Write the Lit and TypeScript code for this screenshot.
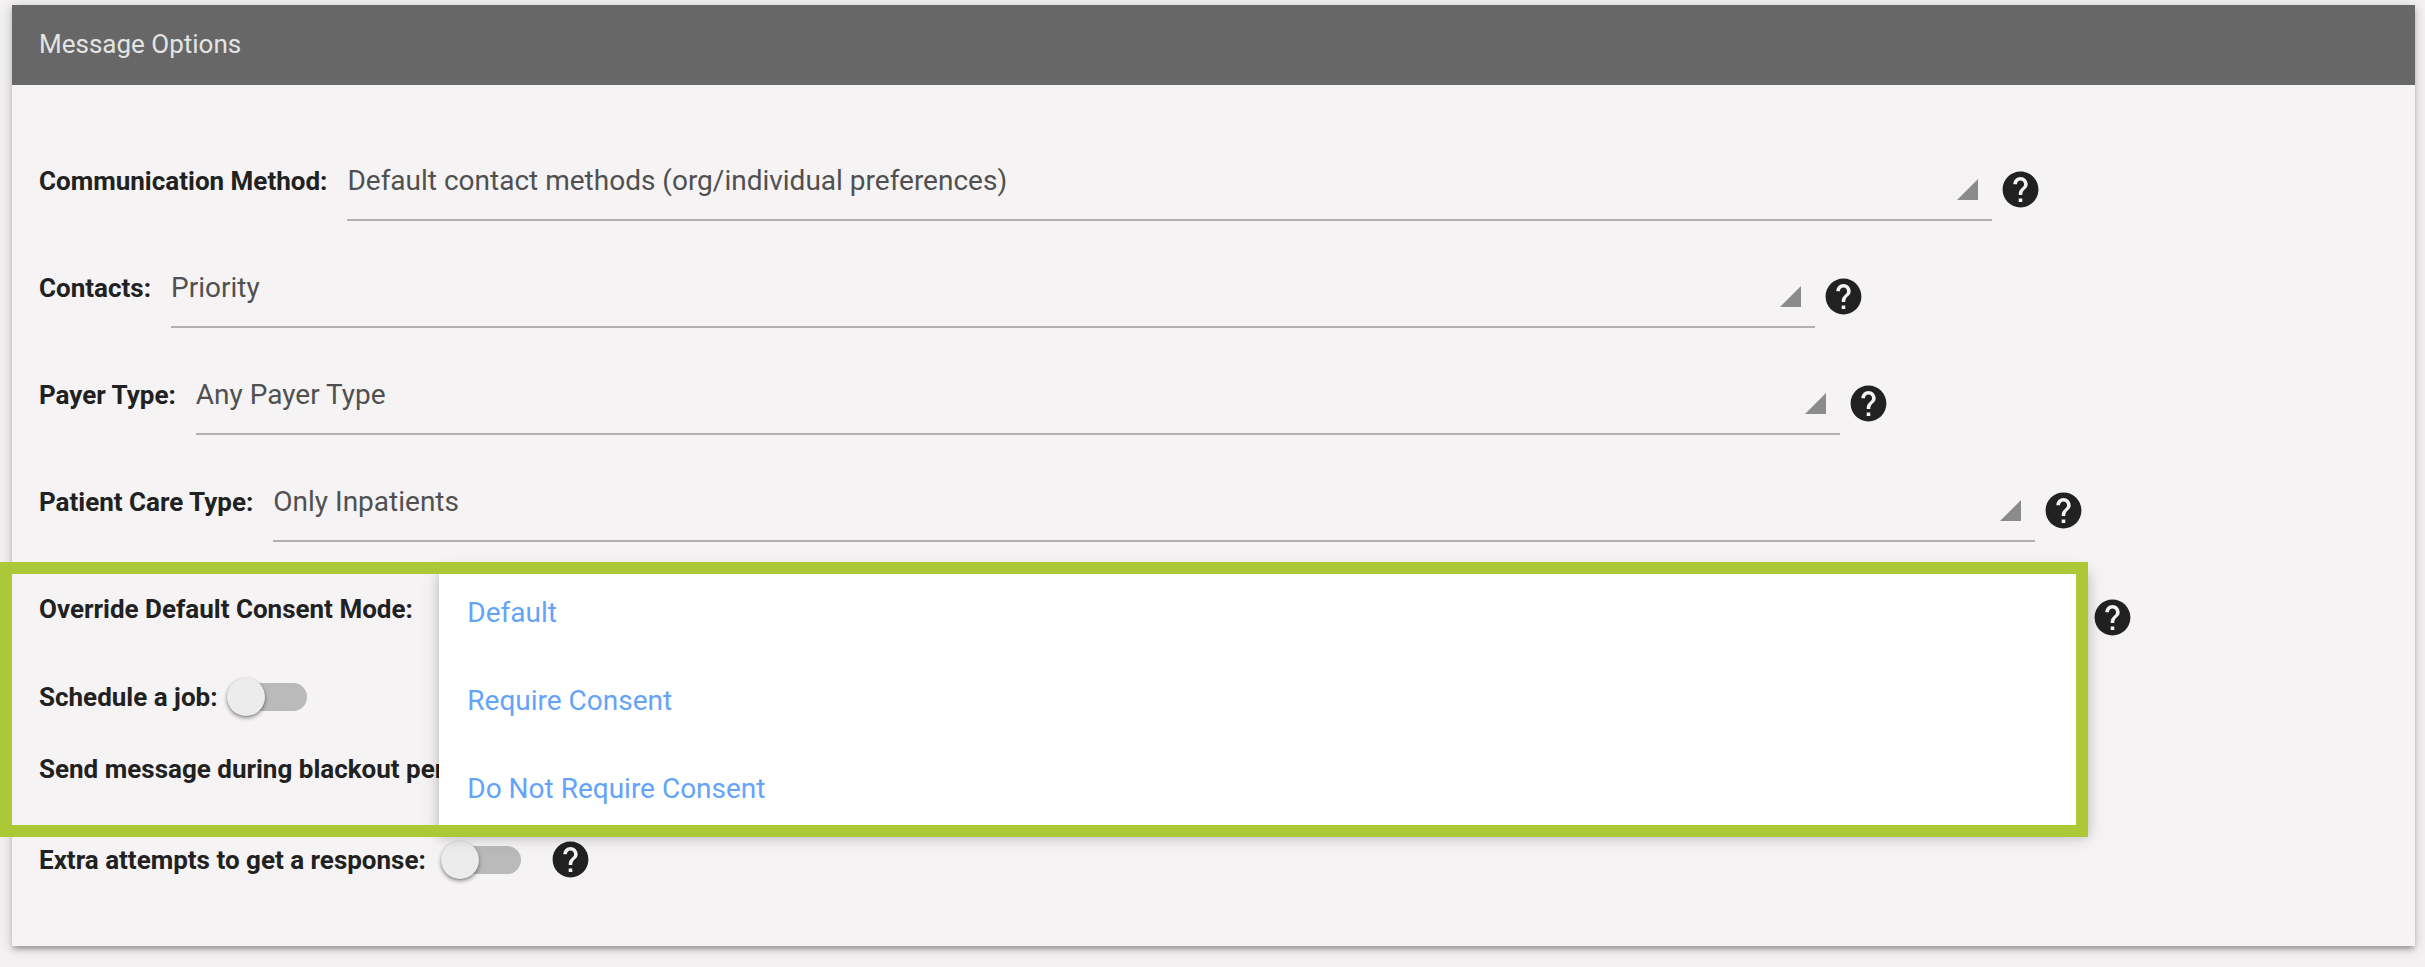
import { LitElement, html, css } from "lit";
import { customElement, property, state } from "lit/decorators.js";
import { classMap } from "lit/directives/class-map.js";

@customElement("help-button")
class HelpButton extends LitElement {
  @property() topic = "";

  static styles = css`
    :host {
      display: block;
      flex: none;
    }
    .help {
      display: block;
      width: 43px;
      height: 43px;
      padding: 0;
      border: 0;
      background: none;
      color: #212121;
      cursor: pointer;
    }
    .icon {
      display: block;
      width: 100%;
      height: 100%;
      fill: currentColor;
    }
  `;

  render() {
    return html`
      <button class="help" type="button" aria-label="Help: ${this.topic}">
        <svg class="icon" viewBox="0 0 24 24" aria-hidden="true">
          <path
            d="M12 2C6.48 2 2 6.48 2 12s4.48 10 10 10 10-4.48 10-10S17.52 2 12 2zm1 17h-2v-2h2v2zm2.07-7.75l-.9.92C13.45 12.9 13 13.5 13 15h-2v-.5c0-1.1.45-2.1 1.17-2.83l1.24-1.26c.37-.36.59-.86.59-1.41 0-1.1-.9-2-2-2s-2 .9-2 2H8c0-2.21 1.79-4 4-4s4 1.79 4 4c0 .88-.36 1.68-.93 2.25z"
          />
        </svg>
      </button>
    `;
  }
}

@customElement("select-row")
class SelectRow extends LitElement {
  @property() label = "";
  @property({ type: Array }) options: string[] = [];
  @property({ type: Boolean }) wide = false;
  @property({ type: Boolean }) open = false;
  @state() private chosen = 0;

  static styles = css`
    :host {
      display: block;
    }
    .row {
      display: flex;
      align-items: baseline;
    }
    .label {
      flex: none;
      margin-right: 20px;
      font-size: 26px;
      line-height: 32px;
      font-weight: 700;
      color: #212121;
      white-space: pre;
    }
    .field {
      position: relative;
      flex: none;
      width: 70%;
    }
    .field.wide {
      width: 75%;
    }
    .select {
      appearance: none;
      display: block;
      box-sizing: border-box;
      width: 100%;
      height: 60px;
      margin: 0;
      padding: 4px 48px 22px 0;
      border: 0;
      border-bottom: 2px solid #b1afb0;
      border-radius: 0;
      outline: none;
      background: none;
      font: 400 28px/32px Roboto, sans-serif;
      color: #505050;
    }
    .arrow {
      position: absolute;
      right: 14px;
      bottom: 21px;
      width: 21px;
      height: 21px;
      fill: #8b8b8b;
      pointer-events: none;
    }
    .help {
      align-self: flex-start;
      margin: 7px 0 0 7px;
    }
    .menu {
      position: absolute;
      z-index: 1;
      top: -20px;
      left: 0;
      right: -4px;
      background: #fff;
      box-shadow: 0 4px 10px rgba(0, 0, 0, 0.16), 0 4px 20px rgba(0, 0, 0, 0.12);
    }
    .option {
      display: block;
      width: 100%;
      height: 88px;
      padding: 0 28px;
      border: 0;
      background: none;
      text-align: left;
      font: 400 28px/32px Roboto, sans-serif;
      color: #64a3fb;
      cursor: pointer;
    }
  `;

  private pick(index: number) {
    this.chosen = index;
    this.open = false;
  }

  render() {
    return html`
      <div class="row">
        <label class="label" for="choice">${this.label}</label>
        <div class=${classMap({ field: true, wide: this.wide })}>
          <select
            class="select"
            id="choice"
            @change=${(e: Event) => this.pick((e.target as HTMLSelectElement).selectedIndex)}
          >
            ${this.options.map((o, i) => html`<option ?selected=${i === this.chosen}>${o}</option>`)}
          </select>
          <svg class="arrow" viewBox="0 0 21 21" aria-hidden="true"><path d="M21 0v21H0z" /></svg>
          ${this.open
            ? html`<div class="menu" role="listbox" aria-label=${this.label}>
                ${this.options.map(
                  (o, i) => html`<button
                    class="option"
                    type="button"
                    role="option"
                    aria-selected=${i === this.chosen}
                    @click=${() => this.pick(i)}
                  >
                    ${o}
                  </button>`
                )}
              </div>`
            : null}
        </div>
        <help-button class="help" topic=${this.label}></help-button>
      </div>
    `;
  }
}

@customElement("toggle-row")
class ToggleRow extends LitElement {
  @property() label = "";
  @property({ type: Boolean }) help = false;

  static styles = css`
    :host {
      display: block;
    }
    .row {
      display: flex;
      align-items: center;
    }
    .label {
      flex: none;
      margin-right: 9px;
      font-size: 26px;
      line-height: 32px;
      font-weight: 700;
      color: #212121;
      white-space: pre;
    }
    .switch {
      appearance: none;
      display: flex;
      align-items: center;
      flex: none;
      width: 80px;
      height: 28px;
      margin: 0;
      border-radius: 14px;
      background: linear-gradient(#bababa, #bababa) right / 68px 28px no-repeat;
      cursor: pointer;
    }
    .switch::before {
      content: "";
      width: 38px;
      height: 38px;
      flex: none;
      border-radius: 50%;
      background: #ececec;
      box-shadow: 0 2px 4px rgba(0, 0, 0, 0.4), 0 1px 2px rgba(0, 0, 0, 0.15);
    }
    .switch:checked {
      justify-content: flex-end;
    }
    .help {
      margin-left: 28px;
    }
  `;

  render() {
    return html`
      <div class="row">
        <label class="label" for="toggle">${this.label}</label>
        <input class="switch" id="toggle" type="checkbox" role="switch" />
        ${this.help ? html`<help-button class="help" topic=${this.label}></help-button>` : null}
      </div>
    `;
  }
}

@customElement("app-root")
class AppRoot extends LitElement {
  static styles = css`
    :host {
      display: block;
      box-sizing: border-box;
      min-height: 100vh;
      padding: 5px 10px 20px 12px;
      background: #f3f1f2;
      font-family: Roboto, sans-serif;
    }
    .card {
      background: #f5f3f4;
      box-shadow: 0 4px 4px rgba(0, 0, 0, 0.14), 0 2px 12px rgba(0, 0, 0, 0.2),
        0 6px 4px -4px rgba(0, 0, 0, 0.14);
    }
    .title {
      margin: 0;
      padding: 23px 27px 25px;
      background: #676767;
      font-size: 26px;
      line-height: 32px;
      font-weight: 400;
      color: #e4e4e4;
    }
    .form {
      padding: 76px 27px 65px;
    }
    .selects {
      display: grid;
      gap: 47px;
      margin-bottom: 47px;
    }
    .consent {
      position: relative;
    }
    .highlight {
      position: absolute;
      z-index: 2;
      top: -27px;
      bottom: -52px;
      left: -39px;
      box-sizing: border-box;
      width: calc(70% + 444px);
      border: 12px solid #acc836;
      pointer-events: none;
    }
    .schedule {
      margin-top: 32px;
    }
    .blackout {
      margin-top: 40px;
    }
    .attempts {
      margin-top: 53px;
    }
  `;

  render() {
    return html`
      <section class="card">
        <h2 class="title">Message Options</h2>
        <form class="form">
          <div class="selects">
            <select-row
              label="Communication Method:"
              .options=${["Default contact methods (org/individual preferences)"]}
            ></select-row>
            <select-row label="Contacts:" .options=${["Priority"]}></select-row>
            <select-row label="Payer Type:" .options=${["Any Payer Type"]}></select-row>
            <select-row label="Patient Care Type:" wide .options=${["Only Inpatients"]}></select-row>
          </div>
          <div class="consent">
            <select-row
              label="Override Default Consent Mode: "
              open
              .options=${["Default", "Require Consent", "Do Not Require Consent"]}
            ></select-row>
            <toggle-row class="schedule" label="Schedule a job:"></toggle-row>
            <toggle-row class="blackout" label="Send message during blackout periods:"></toggle-row>
            <div class="highlight"></div>
          </div>
          <toggle-row class="attempts" label="Extra attempts to get a response: " help></toggle-row>
        </form>
      </section>
    `;
  }
}
